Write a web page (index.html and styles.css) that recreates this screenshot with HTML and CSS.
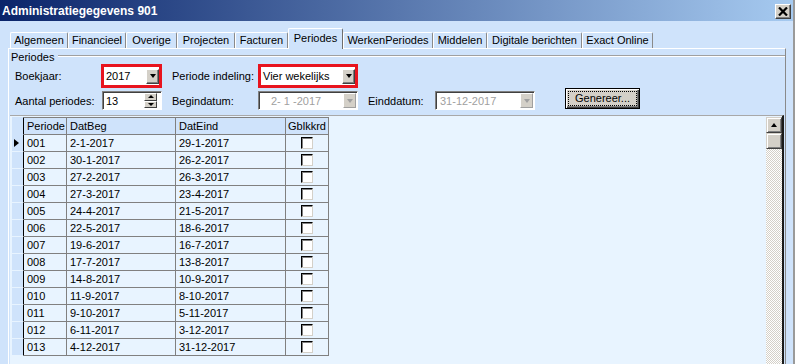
FILE: index.html
```html
<!DOCTYPE html>
<html>
<head>
<meta charset="utf-8">
<link rel="stylesheet" href="styles.css">
</head>
<body>
<div class="window">
  <div class="titlebar">
    <span class="title">Administratiegegevens 901</span>
    <span class="close"><svg width="10" height="9" viewBox="0 0 10 9"><path d="M1 0.5 L9 8.5 M9 0.5 L1 8.5" stroke="#000" stroke-width="2.2"/></svg></span>
  </div>
  <div class="client">
    <div class="tabs">
      <div class="tab w58">Algemeen</div>
      <div class="tab w58">Financieel</div>
      <div class="tab w51">Overige</div>
      <div class="tab w58">Projecten</div>
      <div class="tab w53">Facturen</div>
      <div class="tab active w55">Periodes</div>
      <div class="tab w90">WerkenPeriodes</div>
      <div class="tab w54">Middelen</div>
      <div class="tab w95">Digitale berichten</div>
      <div class="tab w71">Exact Online</div>
    </div>
    <div class="panel">
      <div class="legend-row"><span class="legend">Periodes</span><span class="rule"></span></div>
      <div class="form-row row1">
        <span class="lbl lw86">Boekjaar:</span>
        <div class="redbox rw61">
          <div class="combo-inner"><span class="val">2017</span><span class="ddbtn"><i class="tri"></i></span></div>
        </div>
        <span class="lbl lw86 ml10">Periode indeling:</span>
        <div class="redbox rw100">
          <div class="combo-inner"><span class="val">Vier wekelijks</span><span class="ddbtn"><i class="tri"></i></span></div>
        </div>
      </div>
      <div class="form-row row2">
        <span class="lbl lw87">Aantal periodes:</span>
        <div class="spin">
          <span class="val">13</span>
          <span class="spinbtns"><span class="sb"><i class="tri up"></i></span><span class="sb"><i class="tri"></i></span></span>
        </div>
        <span class="lbl lw86 ml10">Begindatum:</span>
        <div class="dcombo"><span class="val pad11">2- 1 -2017</span><span class="ddbtn dis"><i class="tri grey"></i></span></div>
        <span class="lbl lw67 ml10">Einddatum:</span>
        <div class="dcombo"><span class="val">31-12-2017</span><span class="ddbtn dis"><i class="tri grey"></i></span></div>
        <button class="btn"><span class="focus">Genereer...</span></button>
      </div>
      <div class="grid">
        <div class="table">
          <div class="tr head">
            <div class="td ind"></div>
            <div class="td c1">Periode</div>
            <div class="td c2">DatBeg</div>
            <div class="td c3">DatEind</div>
            <div class="td c4 ctr">Gblkkrd</div>
          </div>
          <div class="tr"><div class="td ind"><i class="rowptr"></i></div><div class="td c1">001</div><div class="td c2">2-1-2017</div><div class="td c3">29-1-2017</div><div class="td c4 ctr"><span class="chk"></span></div></div>
          <div class="tr"><div class="td ind"></div><div class="td c1">002</div><div class="td c2">30-1-2017</div><div class="td c3">26-2-2017</div><div class="td c4 ctr"><span class="chk"></span></div></div>
          <div class="tr"><div class="td ind"></div><div class="td c1">003</div><div class="td c2">27-2-2017</div><div class="td c3">26-3-2017</div><div class="td c4 ctr"><span class="chk"></span></div></div>
          <div class="tr"><div class="td ind"></div><div class="td c1">004</div><div class="td c2">27-3-2017</div><div class="td c3">23-4-2017</div><div class="td c4 ctr"><span class="chk"></span></div></div>
          <div class="tr"><div class="td ind"></div><div class="td c1">005</div><div class="td c2">24-4-2017</div><div class="td c3">21-5-2017</div><div class="td c4 ctr"><span class="chk"></span></div></div>
          <div class="tr"><div class="td ind"></div><div class="td c1">006</div><div class="td c2">22-5-2017</div><div class="td c3">18-6-2017</div><div class="td c4 ctr"><span class="chk"></span></div></div>
          <div class="tr"><div class="td ind"></div><div class="td c1">007</div><div class="td c2">19-6-2017</div><div class="td c3">16-7-2017</div><div class="td c4 ctr"><span class="chk"></span></div></div>
          <div class="tr"><div class="td ind"></div><div class="td c1">008</div><div class="td c2">17-7-2017</div><div class="td c3">13-8-2017</div><div class="td c4 ctr"><span class="chk"></span></div></div>
          <div class="tr"><div class="td ind"></div><div class="td c1">009</div><div class="td c2">14-8-2017</div><div class="td c3">10-9-2017</div><div class="td c4 ctr"><span class="chk"></span></div></div>
          <div class="tr"><div class="td ind"></div><div class="td c1">010</div><div class="td c2">11-9-2017</div><div class="td c3">8-10-2017</div><div class="td c4 ctr"><span class="chk"></span></div></div>
          <div class="tr"><div class="td ind"></div><div class="td c1">011</div><div class="td c2">9-10-2017</div><div class="td c3">5-11-2017</div><div class="td c4 ctr"><span class="chk"></span></div></div>
          <div class="tr"><div class="td ind"></div><div class="td c1">012</div><div class="td c2">6-11-2017</div><div class="td c3">3-12-2017</div><div class="td c4 ctr"><span class="chk"></span></div></div>
          <div class="tr"><div class="td ind"></div><div class="td c1">013</div><div class="td c2">4-12-2017</div><div class="td c3">31-12-2017</div><div class="td c4 ctr"><span class="chk"></span></div></div>
        </div>
        <div class="vscroll">
          <span class="sbtn"><i class="tri up"></i></span>
          <span class="sthumb"></span>
          <span class="strack"></span>
        </div>
      </div>
    </div>
  </div>
</div>
</body>
</html>
```
FILE: styles.css
```css
html, body {
  margin: 0;
  padding: 0;
  height: 100%;
  overflow: hidden;
}
body {
  font: 11px "Liberation Sans", Arial, sans-serif;
  color: #000;
  background: #cfe3fb;
}
.window {
  width: 795px;
  height: 364px;
  display: flex;
  flex-direction: column;
  box-sizing: border-box;
  border-right: 2px solid #9a9a9a;
}
.titlebar {
  height: 21px;
  flex: none;
  display: flex;
  justify-content: space-between;
  align-items: flex-start;
  padding: 0 2px 0 2px;
  background: linear-gradient(to right, #0a246a, #a6caf0);
}
.title {
  color: #fff;
  font-weight: bold;
  font-size: 12px;
  line-height: 13px;
  margin-top: 5px;
}
.close {
  width: 16px;
  height: 15px;
  margin-top: 4px;
  box-sizing: border-box;
  background: #d4d0c8;
  border: 1px solid;
  border-color: #fff #404040 #404040 #fff;
  box-shadow: inset -1px -1px #808080;
  display: flex;
  align-items: center;
  justify-content: center;
}
.client {
  flex: 1;
  display: flex;
  flex-direction: column;
  padding: 7px 7px 0 8px;
  min-height: 0;
}
.tabs {
  height: 20px;
  flex: none;
  display: flex;
  align-items: flex-end;
  margin-left: 2px;
  position: relative;
  z-index: 1;
}
.tab {
  height: 16px;
  box-sizing: border-box;
  border-top: 1px solid #fff;
  border-left: 1px solid #fff;
  border-right: 1px solid #8a8a8a;
  border-radius: 2px 2px 0 0;
  text-align: center;
  line-height: 14px;
  white-space: nowrap;
}
.tab.active {
  height: 21px;
  margin-bottom: -1px;
  line-height: 18px;
  background: #cfe3fb;
  border-right-color: #6e6e6e;
}
.w51 { width: 51px; }
.w53 { width: 53px; }
.w54 { width: 54px; }
.w55 { width: 55px; }
.w58 { width: 58px; }
.w71 { width: 71px; }
.w90 { width: 90px; }
.w95 { width: 95px; }

.panel {
  flex: 1;
  display: flex;
  flex-direction: column;
  border-top: 1px solid #fff;
  border-left: 1px solid #fff;
  border-right: 1px solid #8a8a8a;
  min-height: 0;
}
.legend-row {
  display: flex;
  height: 14px;
  line-height: 14px;
  padding-left: 2px;
  margin-top: 1px;
}
.legend { flex: none; }
.rule {
  flex: 1;
  height: 0;
  margin: 5px 0 0 4px;
  border-top: 1px solid #a0a0a0;
  border-bottom: 1px solid #fff;
}
.form-row {
  display: flex;
  align-items: center;
  padding-left: 6px;
}
.row1 { height: 24px; }
.row2 { height: 19px; margin-top: 3px; }
.lbl { flex: none; white-space: nowrap; }
.lw86 { width: 86px; }
.lw87 { width: 87px; }
.lw67 { width: 67px; }
.ml10 { margin-left: 10px; }

.redbox {
  height: 24px;
  box-sizing: border-box;
  border: 3px solid #e8141e;
  background: #fff;
  display: flex;
}
.rw61 { width: 61px; }
.rw100 { width: 100px; }
.combo-inner {
  flex: 1;
  display: flex;
  align-items: center;
  justify-content: space-between;
}
.val {
  padding-left: 2px;
  white-space: nowrap;
  line-height: 14px;
}
.pad11 { padding-left: 10px; color: #a0a0a0; }
.dcombo .val { color: #a0a0a0; }
.ddbtn {
  width: 13px;
  height: 15px;
  box-sizing: border-box;
  background: #d4d0c8;
  border: 1px solid;
  border-color: #fff #404040 #404040 #fff;
  box-shadow: inset -1px -1px #808080;
  display: flex;
  align-items: center;
  justify-content: center;
}
.ddbtn.dis {
  border-color: #fff #a0a0a0 #a0a0a0 #fff;
  box-shadow: none;
  margin-right: 1px;
}
.tri {
  display: block;
  width: 0;
  height: 0;
  border-left: 3.5px solid transparent;
  border-right: 3.5px solid transparent;
  border-top: 4px solid #000;
}
.tri.up {
  border-top: 0;
  border-bottom: 4px solid #000;
}
.tri.grey { border-top-color: #a0a0a0; }

.spin {
  width: 60px;
  height: 19px;
  box-sizing: border-box;
  margin-left: 0;
  background: #fff;
  border: 1px solid;
  border-color: #808080 #fff #fff #808080;
  box-shadow: inset 1px 1px #404040;
  display: flex;
  align-items: center;
  justify-content: space-between;
  padding-left: 2px;
}
.spin .val { padding-left: 1px; }
.spinbtns {
  display: flex;
  flex-direction: column;
  width: 13px;
  height: 15px;
  margin-right: 4px;
}
.sb {
  flex: 1;
  box-sizing: border-box;
  background: #d4d0c8;
  border: 1px solid;
  border-color: #fff #404040 #404040 #fff;
  display: flex;
  align-items: center;
  justify-content: center;
}
.sb .tri { border-left-width: 3px; border-right-width: 3px; border-top-width: 3px; }
.sb .tri.up { border-bottom-width: 3px; border-top-width: 0; }

.dcombo {
  width: 100px;
  height: 19px;
  box-sizing: border-box;
  background: #fff;
  border: 1px solid;
  border-color: #808080 #fff #fff #808080;
  box-shadow: inset 1px 1px #404040;
  display: flex;
  align-items: center;
  justify-content: space-between;
  padding-left: 2px;
}
.btn {
  margin: -3px 0 0 30px;
  align-self: flex-start;
  width: 75px;
  height: 21px;
  padding: 2px;
  box-sizing: border-box;
  font: inherit;
  background: #d4d0c8;
  border: 1px solid #000;
  box-shadow: inset 1px 1px #fff, inset -1px -1px #404040, inset -2px -2px #808080;
  display: flex;
}
.focus {
  flex: 1;
  border: 1px dotted #000;
  line-height: 13px;
  text-align: center;
}

.grid {
  flex: 1;
  display: flex;
  justify-content: space-between;
  margin: 5px 1px 0 1px;
  padding: 1px 0 0 2px;
  background: #e8f4ff;
  border-top: 1px solid #a8a8a8;
  border-right: 2px solid #1a1a1a;
  min-height: 0;
}
.table {
  display: flex;
  flex-direction: column;
  align-self: flex-start;
}
.tr {
  display: flex;
  height: 17px;
}
.td {
  box-sizing: border-box;
  border-right: 1px solid #808080;
  border-bottom: 1px solid #808080;
  padding-left: 3px;
  line-height: 16px;
  white-space: nowrap;
}
.tr.head { height: 18px; }
.tr.head .td {
  border-top: 1px solid #808080;
  background: #cfe3fb;
}
.td.ind {
  width: 12px;
  padding: 0;
  background: #cfe3fb;
  border-right-color: #000;
  border-bottom-color: #e8f4ff;
  display: flex;
  align-items: center;
}
.tr.head .td.ind { border-top-color: #cfe3fb; border-bottom-color: #cfe3fb; }
.c1 { width: 43px; }
.c2 { width: 109px; }
.c3 { width: 110px; }
.c4 { width: 43px; }
.ctr { text-align: center; padding-left: 0; display: flex; justify-content: center; align-items: center; }
.rowptr {
  display: block;
  width: 0;
  height: 0;
  margin-left: 2px;
  border-top: 4.5px solid transparent;
  border-bottom: 4.5px solid transparent;
  border-left: 5px solid #000;
}
.chk {
  width: 12px;
  height: 12px;
  box-sizing: border-box;
  background: #fff;
  border: 1px solid;
  border-color: #000 #d4d0c8 #d4d0c8 #000;
  box-shadow: inset 1px 1px #808080;
  margin-top: -1px;
}
.vscroll {
  width: 16px;
  flex: none;
  display: flex;
  flex-direction: column;
}
.sbtn, .sthumb {
  height: 16px;
  flex: none;
  box-sizing: border-box;
  background: #d4d0c8;
  border: 1px solid;
  border-color: #d4d0c8 #404040 #404040 #d4d0c8;
  box-shadow: inset 1px 1px #fff, inset -1px -1px #808080;
  display: flex;
  align-items: center;
  justify-content: center;
}
.strack {
  flex: 1;
  background: repeating-conic-gradient(#d4d0c8 0 25%, #fff 0 50%) 0 0 / 2px 2px;
}
```
